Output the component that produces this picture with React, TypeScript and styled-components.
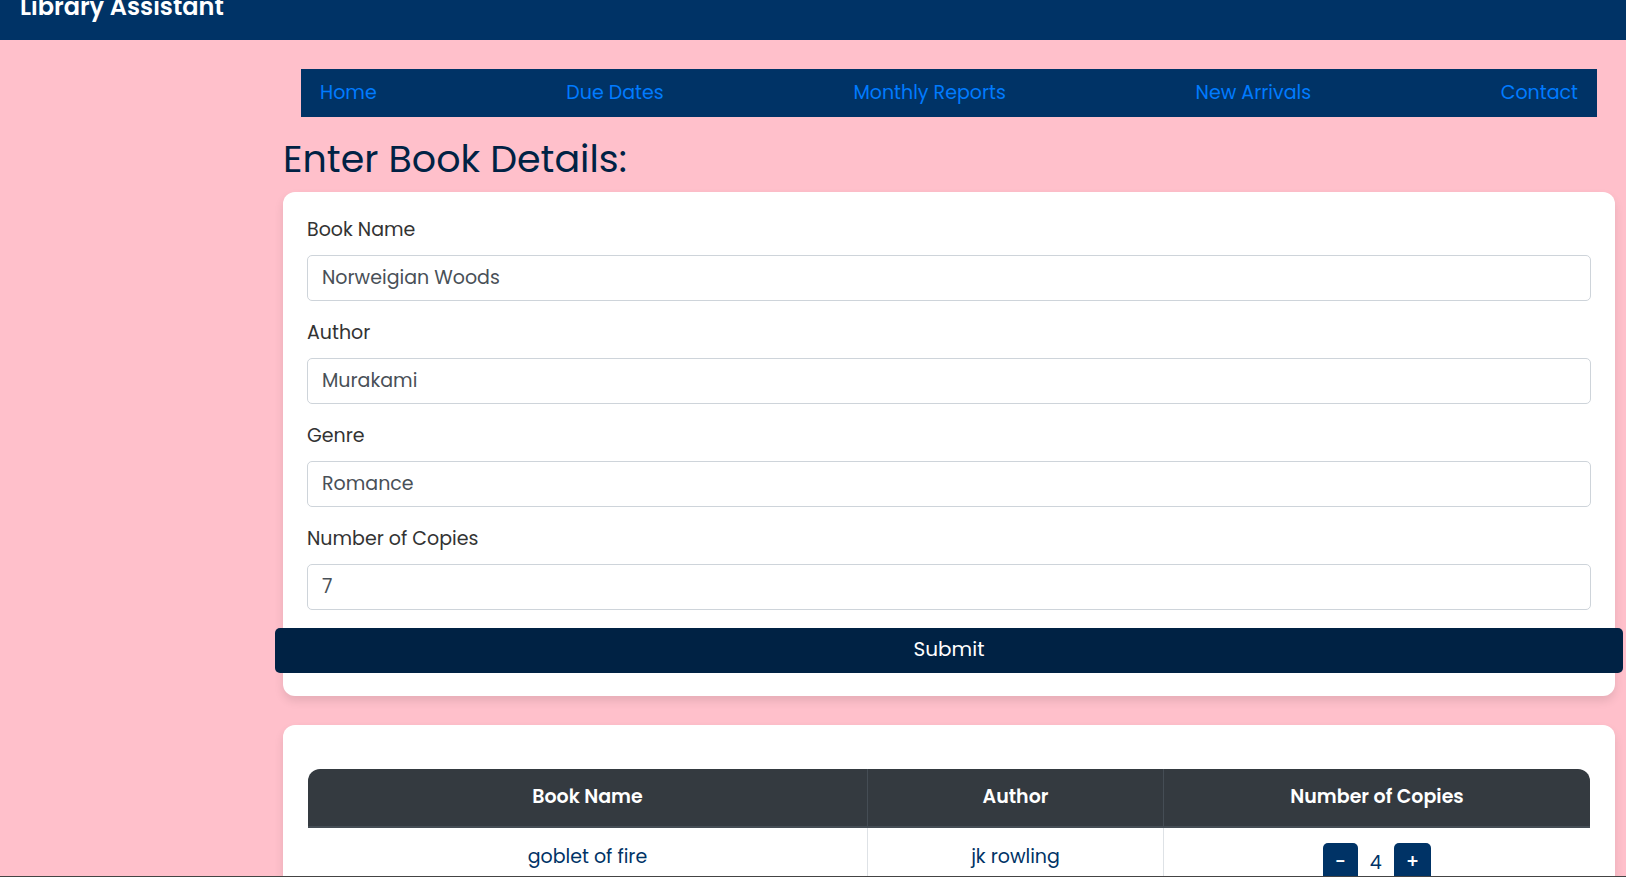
import React from "react";
import styled, { createGlobalStyle } from "styled-components";

const navy = "#003366";
const ink = "#002244";

const GlobalStyle = createGlobalStyle`
  *, *::before, *::after { box-sizing: border-box; }
  body {
    margin: 0;
    background: pink;
    color: #333333;
    font-family: Poppins, Inter, "Liberation Sans", sans-serif;
    font-size: 19px;
    line-height: 30px;
  }
  button, input { font: inherit; }
`;

const Page = styled.div`
  height: 100vh;
  overflow: hidden;
  border-bottom: 1px solid #444444;
`;

const Header = styled.header`
  display: flex;
  align-items: flex-end;
  height: 40px;
  padding: 0 20px 14px;
  overflow: hidden;
  background: ${navy};
  color: #ffffff;
`;

const Brand = styled.div`
  flex: none;
  font-size: 24px;
  line-height: 38px;
  font-weight: 600;
`;

const Columns = styled.div`
  display: grid;
  grid-template-columns: 1fr 5fr;
`;

const Main = styled.main`
  grid-column: 2;
  min-width: 0;
  padding: 29px 11px 0 12px;
`;

const Nav = styled.nav`
  display: flex;
  justify-content: space-between;
  margin: 0 18px;
  padding: 9px 19px;
  background: ${navy};
`;

const NavLink = styled.a`
  color: #007bff;
  text-decoration: none;
`;

const Title = styled.h1`
  margin: 18px 0 9px;
  font-size: 38px;
  line-height: 48px;
  font-weight: 400;
  color: ${ink};
`;

const Card = styled.section`
  margin-bottom: 29px;
  padding: 24px 24px 23px;
  border-radius: 12px;
  background: #ffffff;
  box-shadow: 0 5px 10px rgba(0, 0, 0, 0.1);
`;

const Field = styled.div`
  margin-bottom: 18px;
`;

const Label = styled.label`
  display: block;
  margin-bottom: 11px;
  line-height: 28px;
`;

const Input = styled.input`
  display: block;
  width: 100%;
  height: 46px;
  padding: 0 14px 2px;
  border: 1px solid #ced4da;
  border-radius: 5px;
  background: #ffffff;
  color: #495057;
  outline: none;
`;

const Submit = styled.button`
  display: block;
  width: calc(100% + 64px);
  height: 45px;
  margin: 0 -32px;
  padding: 0 0 3px;
  border: 0;
  border-radius: 5px;
  background: ${ink};
  color: #ffffff;
  font-size: 20px;
`;

const TableCard = styled(Card)`
  padding: 44px 25px;
`;

const Table = styled.table`
  width: 100%;
  table-layout: fixed;
  border-collapse: separate;
  border-spacing: 0;
  border-radius: 12px;
  overflow: hidden;
  text-align: center;
`;

const HeadCell = styled.th<{ $share: string }>`
  width: ${(p) => p.$share};
  height: 59px;
  padding: 0 14px 1px;
  border-bottom: 2px solid #454d55;
  background: #343a40;
  color: #ffffff;
  font-weight: 600;

  & + & { border-left: 1px solid #454d55; }
`;

const Cell = styled.td`
  height: 76px;
  padding: 14px;
  border-bottom: 1px solid #dee2e6;
  color: ${navy};
  vertical-align: top;

  & + & { border-left: 1px solid #dee2e6; }
`;

const Stepper = styled.div`
  display: flex;
  justify-content: center;
  align-items: center;
  gap: 12px;
  padding-top: 1px;
`;

const StepButton = styled.button`
  height: 40px;
  padding: 0 12px 2px;
  border: 0;
  border-radius: 5px;
  background: ${navy};
  color: #ffffff;
  font-weight: 500;
`;

const links = ["Home", "Due Dates", "Monthly Reports", "New Arrivals", "Contact"];

const fields = [
  { id: "book-name", label: "Book Name", value: "Norweigian Woods" },
  { id: "author", label: "Author", value: "Murakami" },
  { id: "genre", label: "Genre", value: "Romance" },
  { id: "copies", label: "Number of Copies", value: "7" },
];

export default function App() {
  const [copies, setCopies] = React.useState(4);
  return (
    <Page>
      <GlobalStyle />
      <Header>
        <Brand>Library Assistant</Brand>
      </Header>
      <Columns>
        <Main>
          <Nav>
            {links.map((name) => (
              <NavLink key={name} href="#">{name}</NavLink>
            ))}
          </Nav>
          <Title>Enter Book Details:</Title>
          <Card as="form" onSubmit={(e: React.FormEvent) => e.preventDefault()}>
            {fields.map((f) => (
              <Field key={f.id}>
                <Label htmlFor={f.id}>{f.label}</Label>
                <Input id={f.id} type="text" defaultValue={f.value} />
              </Field>
            ))}
            <Submit type="submit">Submit</Submit>
          </Card>
          <TableCard>
            <Table>
              <thead>
                <tr>
                  <HeadCell $share="43.6%">Book Name</HeadCell>
                  <HeadCell $share="23.1%">Author</HeadCell>
                  <HeadCell $share="33.3%">Number of Copies</HeadCell>
                </tr>
              </thead>
              <tbody>
                <tr>
                  <Cell>goblet of fire</Cell>
                  <Cell>jk rowling</Cell>
                  <Cell>
                    <Stepper>
                      <StepButton type="button" onClick={() => setCopies(Math.max(0, copies - 1))}>-</StepButton>
                      <span>{copies}</span>
                      <StepButton type="button" onClick={() => setCopies(copies + 1)}>+</StepButton>
                    </Stepper>
                  </Cell>
                </tr>
              </tbody>
            </Table>
          </TableCard>
        </Main>
      </Columns>
    </Page>
  );
}
